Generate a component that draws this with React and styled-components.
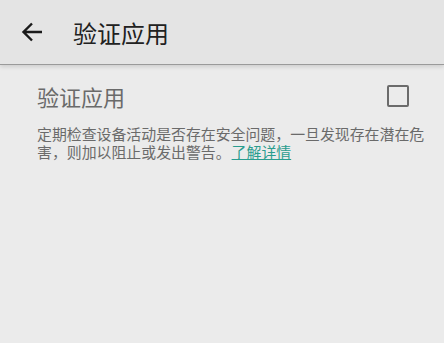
import styled, { createGlobalStyle } from "styled-components";

const GlobalStyle = createGlobalStyle`
  html, body {
    margin: 0;
    padding: 0;
    background: #ebebeb;
  }
  body {
    font-family: "Roboto", "Noto Sans CJK SC", sans-serif;
  }
`;

const Page = styled.div`
  width: 444px;
  height: 343px;
  background: #ebebeb;
  overflow: hidden;
`;

const Toolbar = styled.header`
  height: 64px;
  background: #e4e4e4;
  display: flex;
  align-items: center;
  padding-left: 20px;
  border-bottom: 1px solid #9a9a9a;
  box-shadow: 0 2px 4px rgba(0, 0, 0, 0.12);
  position: relative;
`;

const BackButton = styled.button`
  width: 24px;
  height: 24px;
  padding: 0;
  border: none;
  background: none;
  display: flex;
  align-items: center;
  justify-content: center;
  margin-right: 29px;
`;

const Title = styled.h1`
  margin: 0;
  font-size: 24px;
  font-weight: 400;
  color: #212121;
  font-family: "Noto Sans CJK SC", sans-serif;
`;

const Content = styled.main`
  padding: 14px 16px 0 37px;
`;

const Row = styled.div`
  display: flex;
  align-items: center;
  justify-content: space-between;
  height: 34px;
`;

const ItemTitle = styled.div`
  font-size: 22px;
  color: #6a6a6a;
  font-family: "Noto Sans CJK SC", sans-serif;
`;

const Checkbox = styled.span`
  width: 18px;
  height: 18px;
  border: 2.5px solid #6b6b6b;
  border-radius: 2px;
  margin-right: 19px;
`;

const Description = styled.p`
  margin: 12px 0 0;
  width: 392px;
  font-size: 14.9px;
  line-height: 18px;
  color: #6a6a6a;
  font-family: "Noto Sans CJK SC", sans-serif;
`;

const Link = styled.a`
  display: inline-block;
  line-height: 18px;
  color: #2a9d8f;
  text-decoration: underline;
  margin-left: 1px;
`;

export default function App() {
  return (
    <Page>
      <GlobalStyle />
      <Toolbar>
        <BackButton aria-label="返回">
          <svg width="24" height="24" viewBox="0 0 24 24">
            <path
              d="M22 12H4M12 3.5L3.5 12 12 20.5"
              fill="none"
              stroke="#1a1a1a"
              strokeWidth="2.4"
            />
          </svg>
        </BackButton>
        <Title>验证应用</Title>
      </Toolbar>
      <Content>
        <Row>
          <ItemTitle>验证应用</ItemTitle>
          <Checkbox />
        </Row>
        <Description>
          定期检查设备活动是否存在安全问题，一旦发现存在潜在危害，则加以阻止或发出警告。<Link>了解详情</Link>
        </Description>
      </Content>
    </Page>
  );
}
